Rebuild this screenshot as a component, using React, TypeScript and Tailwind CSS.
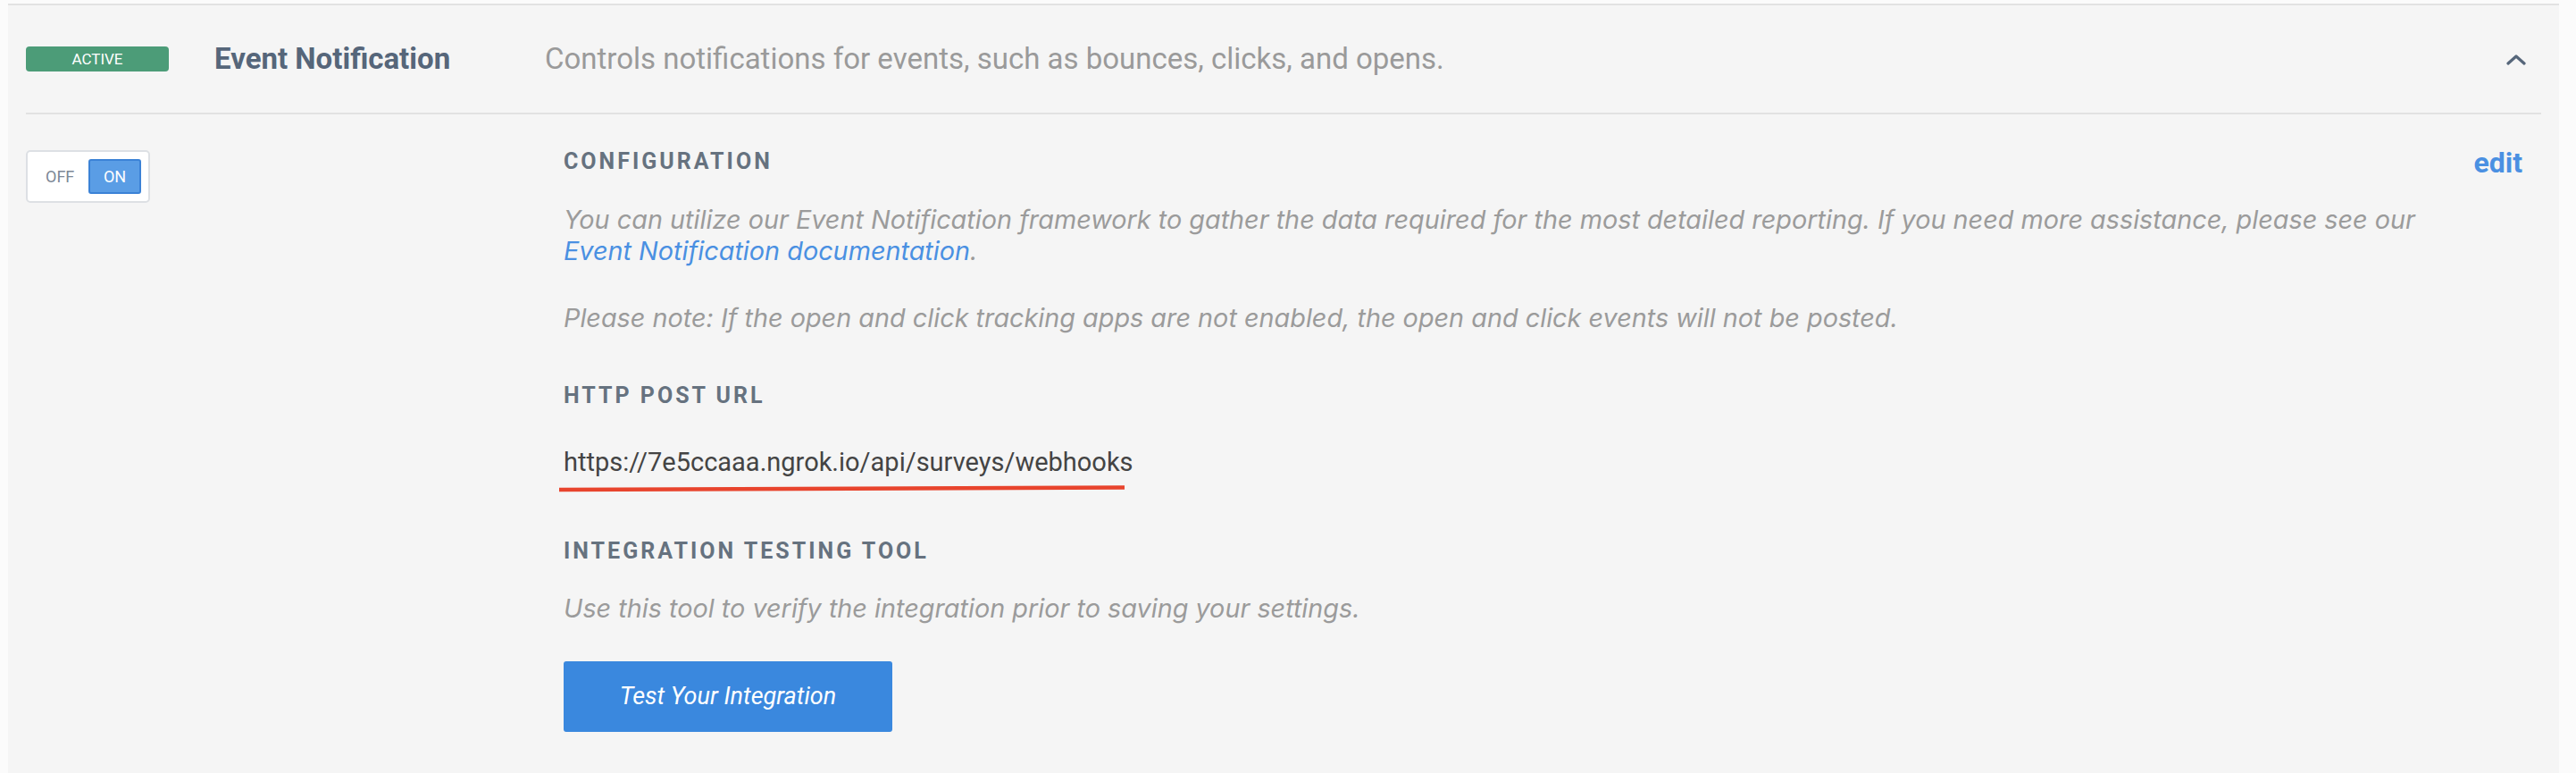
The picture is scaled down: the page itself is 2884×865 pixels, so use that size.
import React from "react";

function ChevronUp() {
  return (
    <svg width="22" height="13" viewBox="0 0 22 13" fill="none">
      <polyline points="2,11 11,3 20,11" stroke="#56667a" strokeWidth="3.2" strokeLinecap="round" strokeLinejoin="round" />
    </svg>
  );
}

function Toggle() {
  return (
    <div className="flex h-[59px] w-[139px] items-center rounded-[5px] border-2 border-[#dde0e4] bg-white pr-[8px]">
      <span className="ml-[20px] text-[18px] leading-none text-[#7d8896]">OFF</span>
      <span className="ml-auto flex h-[39px] w-[59px] items-center justify-center rounded-[3px] border-2 border-[#3b82d6] bg-[#5a9de5] text-[18px] leading-none text-white">
        ON
      </span>
    </div>
  );
}

function Heading({ children }: { children: React.ReactNode }) {
  return (
    <h3 className="font-['Roboto',sans-serif] text-[25px] font-bold uppercase leading-[30px] tracking-[3px] text-[#66727f]">
      {children}
    </h3>
  );
}

export default function App() {
  return (
    <div className="h-[865px] w-full bg-[#fbfbfb] pt-[4px] font-['Roboto',sans-serif]">
      <div className="ml-[9px] h-[861px] w-[2856px] border-t-2 border-[#e2e2e2] bg-[#f5f5f5]">
        {/* header */}
        <div className="flex h-[120px] items-center pl-[20px] pr-[37px]">
          <span className="flex h-[28px] w-[160px] items-center justify-center rounded-[4px] bg-[#4c9c78] text-[17px] leading-none text-white">
            ACTIVE
          </span>
          <span className="ml-[51px] w-[370px] text-[33px] font-bold text-[#56667a]">
            Event Notification
          </span>
          <span className="text-[33px] text-[#9a9a9a]">
            Controls notifications for events, such as bounces, clicks, and opens.
          </span>
          <span className="ml-auto">
            <ChevronUp />
          </span>
        </div>
        <div className="mx-[20px] h-[2px] bg-[#e2e2e2]" />

        {/* body */}
        <div className="flex pl-[20px] pr-[41px] pt-[38px]">
          <div className="w-[602px] pt-[2px]">
            <Toggle />
          </div>
          <div className="flex-1 font-['Inter',sans-serif]">
            <div className="flex items-start justify-between">
              <Heading>Configuration</Heading>
              <a className="-mt-[2px] font-['Roboto',sans-serif] text-[32px] font-bold leading-[36px] text-[#4a90e2]">edit</a>
            </div>
            <p className="mt-[28px] text-[28.8px] italic leading-[35px] text-[#9b9b9b]">
              You can utilize our Event Notification framework to gather the data required for the most detailed reporting. If you need more assistance, please see our{" "}
              <br />
              <a className="text-[#4a90e2]">Event Notification documentation</a>.
            </p>
            <p className="mt-[40px] text-[28.8px] italic leading-[35px] text-[#9b9b9b]">
              Please note: If the open and click tracking apps are not enabled, the open and click events will not be posted.
            </p>
            <div className="mt-[55px]">
              <Heading>HTTP Post URL</Heading>
            </div>
            <div className="relative mt-[42px] w-fit font-['Roboto',sans-serif]">
              <span className="text-[29px] leading-[35px] text-[#444444]">
                https://7e5ccaaa.ngrok.io/api/surveys/webhooks
              </span>
              <svg className="absolute left-[-6px] top-[43px]" width="640" height="8" viewBox="0 0 640 8">
                <line x1="1" y1="5" x2="634" y2="2.5" stroke="#e8442d" strokeWidth="4.5" />
              </svg>
            </div>
            <div className="mt-[67px]">
              <Heading>Integration Testing Tool</Heading>
            </div>
            <p className="mt-[31px] text-[28.8px] italic leading-[35px] text-[#9b9b9b]">
              Use this tool to verify the integration prior to saving your settings.
            </p>
            <button className="mt-[42px] flex h-[79px] w-[368px] items-center justify-center rounded-[3px] bg-[#3a88de] font-['Roboto',sans-serif] text-[27px] italic text-white">
              Test Your Integration
            </button>
          </div>
        </div>
      </div>
    </div>
  );
}
